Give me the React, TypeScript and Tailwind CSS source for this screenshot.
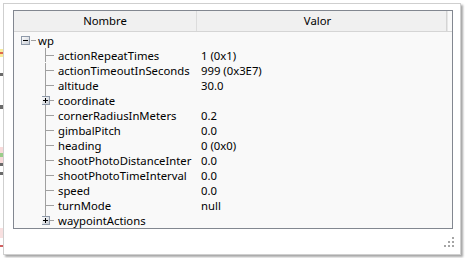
import React from 'react';

type Row = {
  name: string;
  value?: string;
  expander?: 'plus' | 'minus';
  level: number;
  last?: boolean;
};

const rows: Row[] = [
  { name: 'wp', expander: 'minus', level: 0 },
  { name: 'actionRepeatTimes', value: '1 (0x1)', level: 1 },
  { name: 'actionTimeoutInSeconds', value: '999 (0x3E7)', level: 1 },
  { name: 'altitude', value: '30.0', level: 1 },
  { name: 'coordinate', expander: 'plus', level: 1 },
  { name: 'cornerRadiusInMeters', value: '0.2', level: 1 },
  { name: 'gimbalPitch', value: '0.0', level: 1 },
  { name: 'heading', value: '0 (0x0)', level: 1 },
  { name: 'shootPhotoDistanceInter', value: '0.0', level: 1 },
  { name: 'shootPhotoTimeInterval', value: '0.0', level: 1 },
  { name: 'speed', value: '0.0', level: 1 },
  { name: 'turnMode', value: 'null', level: 1 },
  { name: 'waypointActions', expander: 'plus', level: 1, last: true },
];

function ExpandBox({ kind }: { kind: 'plus' | 'minus' }) {
  return (
    <svg width="9" height="9" viewBox="0 0 9 9" className="block">
      <defs>
        <linearGradient id={`g-${kind}`} x1="0" y1="0" x2="1" y2="1">
          <stop offset="0" stopColor="#ffffff" />
          <stop offset="1" stopColor="#c6cbd3" />
        </linearGradient>
      </defs>
      <rect x="0.5" y="0.5" width="8" height="8" fill={`url(#g-${kind})`} stroke="#8e99a8" />
      <rect x="2" y="4" width="5" height="1" fill="#000" />
      {kind === 'plus' && <rect x="4" y="2" width="1" height="5" fill="#000" />}
    </svg>
  );
}

// connector drawing for child rows: vertical trunk + branch to the label
function Connector({ row, first }: { row: Row; first: boolean }) {
  return (
    <svg width="14" height="15" viewBox="0 0 14 15" className="block shrink-0">
      <rect x="3" y={first ? -1 : 0} width="1" height={row.last ? 3 : 15} fill="#a0a0a0" />
      {!row.expander && <rect x="3" y="7" width="9" height="1" fill="#a0a0a0" />}
      {row.expander && (
        <>
          <rect x="8" y="7" width="4" height="1" fill="#a0a0a0" />
          <foreignObject x="-1" y="3" width="9" height="9">
            <ExpandBox kind={row.expander} />
          </foreignObject>
        </>
      )}
    </svg>
  );
}

function TreeRow({ row, index }: { row: Row; index: number }) {
  return (
    <div className="flex h-[15px] leading-[15px]">
      <div className="w-[182px] shrink-0 overflow-hidden whitespace-nowrap flex items-center">
        {row.level === 0 ? (
          <div className="flex items-center pl-[7px]">
            <ExpandBox kind={row.expander ?? 'minus'} />
            <div className="w-[5px] h-px bg-[#a0a0a0] ml-px" />
            <span className="ml-[2px]">{row.name}</span>
          </div>
        ) : (
          <div className="flex items-center pl-[28px]">
            <Connector row={row} first={index === 1} />
            <span className="ml-[2px]">{row.name}</span>
          </div>
        )}
      </div>
      <div className="w-px shrink-0" />
      <div className="pl-[4px] whitespace-nowrap">{row.value ?? ''}</div>
    </div>
  );
}

export default function App() {
  return (
    <div
      className="w-[465px] h-[258px] bg-white flex overflow-hidden text-[11.3px] text-black"
      style={{ fontFamily: '"Noto Sans", "Open Sans", sans-serif' }}
    >
      {/* bits of the windows behind */}
      <div className="w-[3px] shrink-0 flex flex-col">
        <div className="h-[49px]" />
        <div className="h-[3px] bg-[#f8ec9a]" />
        <div className="h-[2px] bg-[#e06a4a]" />
        <div className="h-[3px] bg-[#f8ec9a]" />
        <div className="h-[16px]" />
        <div className="h-[3px] bg-[#6a6a6a]" />
        <div className="h-[29px]" />
        <div className="h-[4px] bg-[#6a6a6a]" />
        <div className="h-[38px]" />
        <div className="h-[6px] bg-[#f8dada]" />
        <div className="h-[4px] bg-[#9acc8a]" />
        <div className="h-[6px] bg-[#f8dada]" />
        <div className="h-[3px] bg-[#6a6a6a]" />
        <div className="h-[6px]" />
        <div className="h-[3px] bg-[#6a6a6a]" />
        <div className="h-[53px]" />
        <div className="h-[10px] bg-[#f8e0e0]" />
        <div className="h-[7px]" />
        <div className="h-[2px] bg-[#d06060]" />
      </div>

      <div className="mt-[3px] w-[458px] h-[252px] shrink-0 bg-white border border-[#cfcfcf] shadow-[2px_2px_2px_rgba(0,0,0,0.35)] flex flex-col pl-[9px] pt-[6px]">
        <div className="w-[440px] h-[219px] border border-[#828790] bg-[#f9f9f9] flex flex-col">
          {/* header */}
          <div className="h-[21px] flex bg-[#f0f0f0] border-b border-[#d5d5d5]">
            <div className="w-[182px] shrink-0 flex items-center justify-center">Nombre</div>
            <div className="w-px bg-[#dcdcdc]" />
            <div className="w-[249px] shrink-0 flex items-center justify-center pr-[8px]">Valor</div>
            <div className="w-px bg-[#d4d4d4]" />
            <div className="w-px bg-[#e6e6e6]" />
            <div className="flex-1 bg-[#f9f9f9]" />
          </div>
          <div className="pt-px flex flex-col">
            {rows.map((r, i) => (
              <TreeRow key={r.name} row={r} index={i} />
            ))}
          </div>
        </div>
        {/* resize grip */}
        <div className="flex justify-end pr-[5px] mt-[8px]">
          <svg width="11" height="11" viewBox="0 0 11 11" className="block">
            <rect x="8" y="0" width="2" height="2" fill="#a5a5a5" />
            <rect x="4" y="4" width="2" height="2" fill="#a5a5a5" />
            <rect x="8" y="4" width="2" height="2" fill="#a5a5a5" />
            <rect x="0" y="8" width="2" height="2" fill="#a5a5a5" />
            <rect x="4" y="8" width="2" height="2" fill="#a5a5a5" />
            <rect x="8" y="8" width="2" height="2" fill="#a5a5a5" />
          </svg>
        </div>
      </div>
    </div>
  );
}
